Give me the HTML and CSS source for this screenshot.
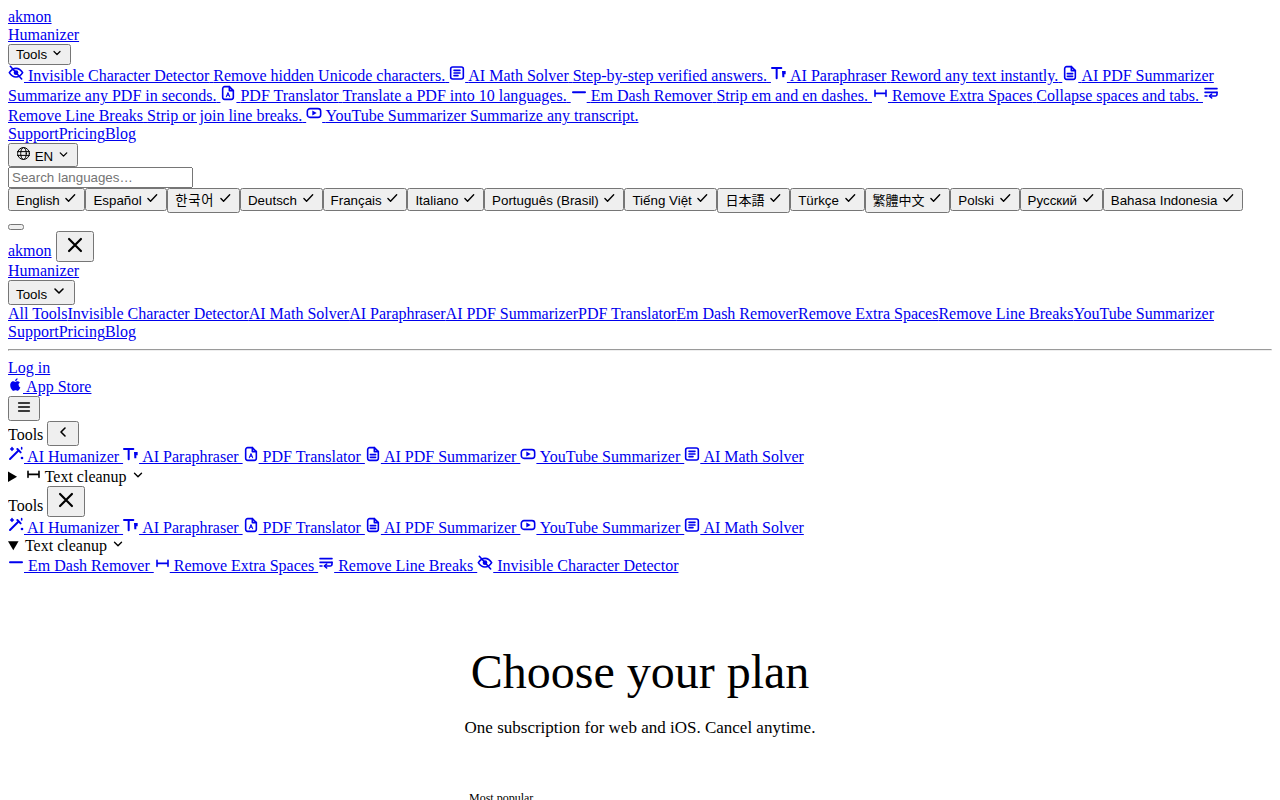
FILE: index.html
```html
<!DOCTYPE html>
<html lang="en">
<head>
<meta charset="UTF-8">
<title>Pricing - akmon Humanizer</title>
<link rel="stylesheet" href="styles.css">
</head>
<body>
<svg class="sprite" xmlns="http://www.w3.org/2000/svg">
  <symbol id="i-chevron" viewBox="0 0 24 24"><path d="M6 9l6 6 6-6"/></symbol>
  <symbol id="i-back" viewBox="0 0 24 24"><path d="M15 6l-6 6 6 6"/></symbol>
  <symbol id="i-check" viewBox="0 0 24 24"><path d="M5 13l4.500 4.500L20 6.500"/></symbol>
  <symbol id="i-close" viewBox="0 0 24 24"><path d="M5.500 5.500l13 13M18.500 5.500l-13 13"/></symbol>
  <symbol id="i-menu" viewBox="0 0 24 24"><path d="M4 6h16M4 12h16M4 18h16"/></symbol>
  <symbol id="i-globe" viewBox="0 0 24 24"><circle class="thin" cx="12" cy="12" r="9.500"/><ellipse class="thin" cx="12" cy="12" rx="4.500" ry="9.500"/><path class="thin" d="M2.500 9h19M2.500 15h19"/></symbol>
  <symbol id="i-eyeoff" viewBox="0 0 24 24"><path d="M2 11.500S6 5 12 5s10 6.500 10 6.500S18 18 12 18 2 11.500 2 11.500z"/><circle class="fill" cx="12" cy="11.500" r="3.500"/><path d="M3.500 2l17 19"/></symbol>
  <symbol id="i-article" viewBox="0 0 24 24"><rect x="2.500" y="3" width="19" height="18" rx="3"/><path d="M7.500 8h9M7.500 12h9M7.500 16h6"/></symbol>
  <symbol id="i-textsize" viewBox="0 0 24 24"><path class="thick" d="M1.500 4.500h14M8.500 4.500V20"/><path class="fill" d="M16.500 9h5.500v5h-2v4.500h-3z"/></symbol>
  <symbol id="i-filelang" viewBox="0 0 24 24"><path d="M14 2.500H7a3 3 0 0 0-3 3v13a3 3 0 0 0 3 3h10a3 3 0 0 0 3-3v-10z"/><path d="M14 2.500v6h6"/><path class="thin" d="M9.500 17.500l2.500-6 2.500 6M10.500 15.500h3"/></symbol>
  <symbol id="i-file" viewBox="0 0 24 24"><path d="M14 2.500H7a3 3 0 0 0-3 3v13a3 3 0 0 0 3 3h10a3 3 0 0 0 3-3v-10z"/><path d="M14 2.500v6h6M8 13h8M8 17h8"/></symbol>
  <symbol id="i-dash" viewBox="0 0 24 24"><path class="thick" d="M3 11h18"/></symbol>
  <symbol id="i-spaces" viewBox="0 0 24 24"><path d="M4.500 8v9M21 8v9M4.500 12.500H21"/></symbol>
  <symbol id="i-wrap" viewBox="0 0 24 24"><path d="M3 5.500h18M3 11h18"/><path d="M21 11v3a2.500 2.500 0 0 1-2.500 2.500H10"/><path d="M13 13.500l-3.500 3 3.500 3M3 16.500h3"/></symbol>
  <symbol id="i-video" viewBox="0 0 24 24"><rect x="2" y="5.500" width="20" height="13" rx="4"/><path class="fill" d="M9.500 8.300l6.500 3.700-6.500 3.700z"/></symbol>
  <symbol id="i-wand" viewBox="0 0 24 24"><path class="thick" d="M3 19.500L15 7.500"/><path class="thick" d="M14 4.500l5 5"/><path d="M6 2.500v4M4 4.500h4M20.500 2.500v2"/><circle class="fill" cx="21" cy="18" r="2"/></symbol>
  <symbol id="i-apple" viewBox="0 0 24 24"><path class="fill" d="M16.800 12.600c0-2.500 2-3.700 2.100-3.800-1.200-1.700-3-1.900-3.600-1.900-1.500-.2-3 .9-3.700.9-.8 0-2-.9-3.200-.9-1.700 0-3.200 1-4.100 2.500-1.700 3-.4 7.500 1.300 10 .9 1.200 1.900 2.600 3.200 2.500 1.300 0 1.800-.8 3.300-.8s2 .8 3.300.8 2.200-1.200 3-2.400c1-1.400 1.400-2.700 1.400-2.800 0 0-2.700-1-2.700-4.100zM14.300 5.200c.7-.8 1.100-2 1-3.200-1 0-2.200.7-2.900 1.500-.6.700-1.200 1.900-1 3 1.100.1 2.200-.6 2.900-1.300z"/></symbol>
</svg>

<header>
  <div>
    <div><a href="#">akmon</a></div>
    <div><a href="#">Humanizer</a></div>
    <div><button>Tools <svg class="ico12"><use href="#i-chevron"/></svg></button></div>
    <div>
      <a href="#"><svg class="ico"><use href="#i-eyeoff"/></svg> <span>Invisible Character Detector</span> <span>Remove hidden Unicode characters.</span> </a>
      <a href="#"><svg class="ico"><use href="#i-article"/></svg> <span>AI Math Solver</span> <span>Step-by-step verified answers.</span> </a>
      <a href="#"><svg class="ico"><use href="#i-textsize"/></svg> <span>AI Paraphraser</span> <span>Reword any text instantly.</span> </a>
      <a href="#"><svg class="ico"><use href="#i-file"/></svg> <span>AI PDF Summarizer</span> <span>Summarize any PDF in seconds.</span> </a>
      <a href="#"><svg class="ico"><use href="#i-filelang"/></svg> <span>PDF Translator</span> <span>Translate a PDF into 10 languages.</span> </a>
      <a href="#"><svg class="ico"><use href="#i-dash"/></svg> <span>Em Dash Remover</span> <span>Strip em and en dashes.</span> </a>
      <a href="#"><svg class="ico"><use href="#i-spaces"/></svg> <span>Remove Extra Spaces</span> <span>Collapse spaces and tabs.</span> </a>
      <a href="#"><svg class="ico"><use href="#i-wrap"/></svg> <span>Remove Line Breaks</span> <span>Strip or join line breaks.</span> </a>
      <a href="#"><svg class="ico"><use href="#i-video"/></svg> <span>YouTube Summarizer</span> <span>Summarize any transcript.</span> </a>
    </div>
    <div><a href="#">Support</a><a href="#">Pricing</a><a href="#">Blog</a></div>
    <div><button><svg class="ico15"><use href="#i-globe"/></svg> EN <svg class="ico13"><use href="#i-chevron"/></svg></button></div>
    <div><input type="text" placeholder="Search languages…"></div>
    <div class="langs">
      <button>English <svg class="ico14"><use href="#i-check"/></svg></button><button>Español <svg class="ico14"><use href="#i-check"/></svg></button><button><span class="cjk ko">한국어</span> <svg class="ico14"><use href="#i-check"/></svg></button><button>Deutsch <svg class="ico14"><use href="#i-check"/></svg></button><button>Français <svg class="ico14"><use href="#i-check"/></svg></button><button>Italiano <svg class="ico14"><use href="#i-check"/></svg></button><button>Português (Brasil) <svg class="ico14"><use href="#i-check"/></svg></button><button>Tiếng Việt <svg class="ico14"><use href="#i-check"/></svg></button><button><span class="cjk ja">日本語</span> <svg class="ico14"><use href="#i-check"/></svg></button><button>Türkçe <svg class="ico14"><use href="#i-check"/></svg></button><button><span class="cjk zh">繁體中文</span> <svg class="ico14"><use href="#i-check"/></svg></button><button>Polski <svg class="ico14"><use href="#i-check"/></svg></button><button>Русский <svg class="ico14"><use href="#i-check"/></svg></button><button>Bahasa Indonesia <svg class="ico14"><use href="#i-check"/></svg></button>
    </div>
  </div>

  <div><button></button></div>

  <div>
    <div><a href="#">akmon</a> <button><svg class="ico22"><use href="#i-close"/></svg></button></div>
    <div><a href="#">Humanizer</a></div>
    <div><button>Tools <svg class="ico16"><use href="#i-chevron"/></svg></button></div>
    <div><a href="#">All Tools</a><a href="#">Invisible Character Detector</a><a href="#">AI Math Solver</a><a href="#">AI Paraphraser</a><a href="#">AI PDF Summarizer</a><a href="#">PDF Translator</a><a href="#">Em Dash Remover</a><a href="#">Remove Extra Spaces</a><a href="#">Remove Line Breaks</a><a href="#">YouTube Summarizer</a></div>
    <div><a href="#">Support</a><a href="#">Pricing</a><a href="#">Blog</a></div>
    <hr>
    <div><a href="#">Log in</a></div>
    <div><a href="#"><svg class="ico15"><use href="#i-apple"/></svg> App Store</a></div>
    <div><button><svg class="ico"><use href="#i-menu"/></svg></button></div>
  </div>

  <div>
    <div>Tools <button><svg class="ico"><use href="#i-back"/></svg></button></div>
    <div>
      <a href="#"><svg class="ico"><use href="#i-wand"/></svg> AI Humanizer </a>
      <a href="#"><svg class="ico"><use href="#i-textsize"/></svg> AI Paraphraser </a>
      <a href="#"><svg class="ico"><use href="#i-filelang"/></svg> PDF Translator </a>
      <a href="#"><svg class="ico"><use href="#i-file"/></svg> AI PDF Summarizer </a>
      <a href="#"><svg class="ico"><use href="#i-video"/></svg> YouTube Summarizer </a>
      <a href="#"><svg class="ico"><use href="#i-article"/></svg> AI Math Solver</a>
    </div>
    <details>
      <summary><svg class="ico"><use href="#i-spaces"/></svg> Text cleanup <svg class="ico14"><use href="#i-chevron"/></svg></summary>
    </details>
  </div>

  <div>
    <div>Tools <button><svg class="ico22"><use href="#i-close"/></svg></button></div>
    <div>
      <a href="#"><svg class="ico"><use href="#i-wand"/></svg> AI Humanizer </a>
      <a href="#"><svg class="ico"><use href="#i-textsize"/></svg> AI Paraphraser </a>
      <a href="#"><svg class="ico"><use href="#i-filelang"/></svg> PDF Translator </a>
      <a href="#"><svg class="ico"><use href="#i-file"/></svg> AI PDF Summarizer </a>
      <a href="#"><svg class="ico"><use href="#i-video"/></svg> YouTube Summarizer </a>
      <a href="#"><svg class="ico"><use href="#i-article"/></svg> AI Math Solver</a>
    </div>
    <details open>
      <summary>Text cleanup <svg class="ico14"><use href="#i-chevron"/></svg></summary>
      <a href="#"><svg class="ico"><use href="#i-dash"/></svg> Em Dash Remover </a>
      <a href="#"><svg class="ico"><use href="#i-spaces"/></svg> Remove Extra Spaces </a>
      <a href="#"><svg class="ico"><use href="#i-wrap"/></svg> Remove Line Breaks </a>
      <a href="#"><svg class="ico"><use href="#i-eyeoff"/></svg> Invisible Character Detector</a>
    </details>
  </div>
</header>

<main>
  <section class="plans-head">
    <h1 class="plans-title">Choose your plan</h1>
    <p class="plans-sub">One subscription for web and iOS. Cancel anytime.</p>
  </section>
  <section class="plans">
    <div class="plan-badge">Most popular</div>
  </section>
</main>
</body>
</html>
```

FILE: styles.css
```css
body {
    font-family: "Liberation Serif", serif;
}

button, input {
    font-family: "Liberation Sans", sans-serif;
}

/* keeps the button row on the latin baseline, the tall cjk font only adds below it */
.cjk {
    display: inline-block;
    line-height: 13px;
    padding-bottom: 3px;
}

.ko {
    font-family: "Liberation Sans", "Noto Sans CJK KR", sans-serif;
    letter-spacing: 0.73px;
}

.ja {
    font-family: "Liberation Sans", "Noto Sans CJK JP", sans-serif;
    font-size: 13px;
}

.zh {
    font-family: "Liberation Sans", "Noto Sans CJK TC", sans-serif;
    font-size: 13px;
}

.sprite {
    display: none;
}

symbol path, symbol circle, symbol rect, symbol ellipse {
    fill: none;
    stroke: currentColor;
    stroke-width: 2.4;
    stroke-linecap: round;
    stroke-linejoin: round;
}

symbol .fill {
    fill: currentColor;
    stroke: none;
}

symbol .thick {
    stroke-width: 3;
}

symbol .thin {
    stroke-width: 1.6;
}

.ico, .ico16 { width: 16px; height: 16px; }
.ico12 { width: 12px; height: 12px; }
.ico13 { width: 13px; height: 13px; }
.ico14 { width: 14px; height: 14px; }
.ico15 { width: 15px; height: 15px; }
.ico22 { width: 22px; height: 22px; }

.plans-head {
    padding-top: 69px;
    text-align: center;
}

.plans-title {
    font-size: 48px;
    font-weight: normal;
    margin: 0;
}

.plans-sub {
    font-size: 17px;
    margin: 19px 0 0;
}

.plans {
    padding: 53px 0 0 461px;
}

.plan-badge {
    font-size: 12px;
}
```
